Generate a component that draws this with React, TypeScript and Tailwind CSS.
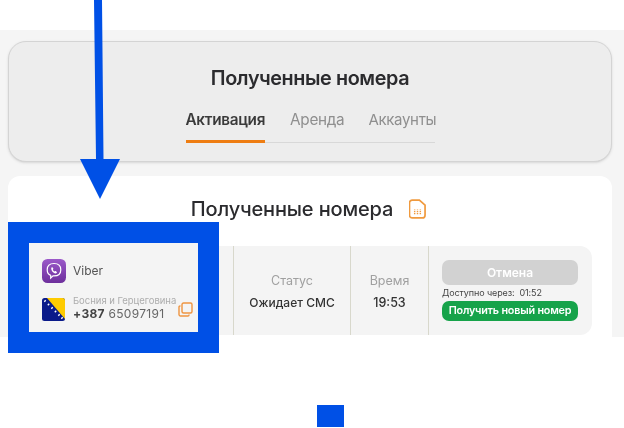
export default function App() {
  return (
    <div className="relative w-[624px] h-[428px] overflow-hidden bg-white text-[#2a2a2a] blur-[0.4px]" style={{ fontFamily: 'Inter, "Noto Sans", sans-serif' }}>
      <div className="h-[30px]" />
      <div className="bg-[#f5f5f5] h-[307px] pt-[11px] pl-2 pr-3 flex flex-col gap-[14px]">
        <section className="h-[121px] rounded-[18px] border border-[#d4d4d4] bg-[#ededed] shadow-sm flex flex-col items-center pt-[21px]">
          <h1 className="text-[19.800px] leading-[30px] font-semibold tracking-[-0.4px] text-[#2b2b2e]">Полученные номера</h1>
          <div className="mt-[16px] w-[249px] border-b border-[#d8d8d8] h-[34px] flex text-[15.300px] leading-[22px] tracking-[-0.3px] text-[#8f8f8f]">
            <div className="w-[80px] h-[34px] border-b-[3px] border-[#ee7d12] font-semibold text-[#3a3a3a]">Активация</div>
            <div className="ml-[25px]">Аренда</div>
            <div className="ml-[24px] text-[15px]">Аккаунты</div>
          </div>
        </section>
        <section className="flex-1 rounded-t-xl bg-white flex flex-col">
          <div className="h-[66px] flex items-center justify-center gap-4 pr-[3px] mb-[4px]">
            <h2 className="text-[20px] font-medium tracking-[-0.15px] text-[#2b2b2e]">Полученные номера</h2>
            <svg width="17" height="20" viewBox="0 0 18 21" fill="none" stroke="#f09a3e" strokeWidth="1.8">
              <path d="M3.500 1h7.500l6 5.500v10.500a3 3 0 0 1-3 3h-10.500a3 3 0 0 1-3-3v-13a3 3 0 0 1 3-3z" />
              <path d="M6 16v-5M9 16v-5M12 16v-5" strokeWidth="1.500" strokeDasharray="1.400 0.800" />
            </svg>
          </div>
          <div className="ml-[22px] mr-[20px] h-[89px] bg-[#f4f4f4] rounded-r-xl flex">
            <div className="w-[204px] border-r border-[#d8d8cc] shrink-0" />
            <div className="w-[117px] border-r border-[#d8d8cc] flex flex-col items-center pt-[25px]">
              <div className="text-[12.500px] leading-[20px] text-[#a0a0a0]">Статус</div>
              <div className="mt-[2px] text-[12px] leading-[20px] font-medium text-[#333]">Ожидает СМС</div>
            </div>
            <div className="w-[78px] border-r border-[#d8d8cc] flex flex-col items-center pt-[25px]">
              <div className="text-[12.500px] leading-[20px] text-[#a0a0a0]">Время</div>
              <div className="mt-[2px] text-[12.500px] leading-[20px] font-medium text-[#333]">19:53</div>
            </div>
            <div className="w-[136px] ml-[13px] pt-[14px] flex flex-col">
              <div className="h-[25px] rounded-[7px] bg-[#d2d2d2] text-white text-[12px] font-semibold flex items-center justify-center">Отмена</div>
              <div className="h-[16px] text-[9px] leading-[16px] tracking-[-0.1px] text-[#444] whitespace-nowrap">Доступно через:&nbsp; 01:52</div>
              <div className="h-[20px] rounded-[7px] bg-[#16a34a] text-white text-[10.800px] font-semibold tracking-[-0.2px] flex items-center justify-center whitespace-nowrap">Получить новый номер</div>
            </div>
          </div>
        </section>
      </div>

      {/* blue annotation overlays */}
      <div className="absolute left-[8px] top-[222px] w-[211px] h-[131px] bg-[#0050e6] p-[21px]">
        <div className="w-[169px] h-[89px] bg-[#f4f4f4] pl-[13px] pt-[16px]">
          <div className="flex items-center gap-[7px] h-[24px]">
            <svg width="24" height="24" viewBox="0 0 24 24">
              <defs>
                <linearGradient id="vb" x1="0" y1="0" x2="0" y2="1">
                  <stop offset="0" stopColor="#9b59c9" />
                  <stop offset="1" stopColor="#6d2f9c" />
                </linearGradient>
              </defs>
              <rect width="24" height="24" rx="5.500" fill="url(#vb)" />
              <path d="M12 4.500c4 0 6.800 1.600 6.800 6.200s-2.800 6.200-6.800 6.200l-1 0-2.300 2.200v-2.700c-2-.8-3.500-2.400-3.500-5.700 0-4.600 2.800-6.200 6.800-6.200z" fill="none" stroke="#fff" strokeWidth="1.200" />
              <path d="M9.500 8.500c.6-.5 1.100-.4 1.400.2l.4.8c.2.400 0 .7-.4 1-.1.700 1 1.900 1.800 2 .3-.4.700-.6 1.100-.3l.8.500c.5.400.5.800 0 1.300-.8.800-1.800.5-3.200-.5-1.600-1.200-2.800-3.500-1.900-5z" fill="#fff" />
            </svg>
            <span className="text-[12px] leading-[26px] text-[#555]">Viber</span>
          </div>
          <div className="mt-[15px] flex items-start gap-[8px]">
            <svg width="23" height="23" viewBox="0 0 23 23" className="shrink-0">
              <rect width="23" height="23" rx="2.500" fill="#0a1a8a" />
              <path d="M5 0H20.500a2.500 2.500 0 0 1 2.500 2.500V21z" fill="#fecb00" />
              <path d="M2.500 2.500l1 1M6 6l1 1M9.500 9.500l1 1M13 13l1 1M16.500 16.500l1 1M19.500 19.500l1 1" stroke="#fff" strokeWidth="2" />
            </svg>
            <div className="relative top-[-4px]">
              <div className="text-[9.500px] leading-[13px] tracking-[-0.02px] text-[#adadad] whitespace-nowrap">Босния и Герцеговина</div>
              <div className="text-[12px] leading-[13px] tracking-[0.3px] text-[#666] whitespace-nowrap"><span className="font-bold text-[#444]">+387</span> 65097191</div>
            </div>
            <svg width="15" height="15" viewBox="0 0 15 15" fill="none" stroke="#ee9440" strokeWidth="1.400" className="shrink-0 mt-[4px] ml-[-6px]">
              <rect x="4" y="1" width="10" height="10" rx="1.500" />
              <path d="M2.500 4H2a1 1 0 0 0-1 1v7.500a1.500 1.500 0 0 0 1.500 1.500H10a1 1 0 0 0 1-1v-.5" />
            </svg>
          </div>
        </div>
      </div>
      <svg className="absolute left-[78px] top-0" width="44" height="200" viewBox="0 0 44 200">
        <path d="M16 0h8l1.500 159H42L22 199 2 159h16z" fill="#0050e6" />
      </svg>
      <div className="absolute left-[317px] top-[405px] w-[27px] h-[22px] bg-[#0050e6]" />
    </div>
  );
}
